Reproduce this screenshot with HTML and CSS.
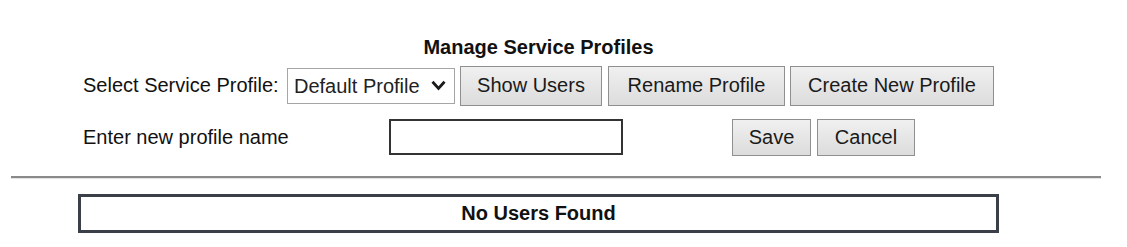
FILE: index.html
```html
<!DOCTYPE html>
<html lang="en">
  <head>
    <meta charset="UTF-8" />
    <meta name="viewport" content="width=device-width, initial-scale=1.0" />
    <title>Manage Service Profiles</title>
    <link rel="stylesheet" href="styles.css">
  </head>
  <body>
    <div class="panel">
      <h1 class="title">Manage Service Profiles</h1>
      <div class="row row-top">
        <label for="profile">Select Service Profile:</label>
        <span class="select-wrap">
          <select id="profile" name="profile">
            <option>Default Profile</option>
          </select>
          <svg class="chevron" width="15" height="11" viewBox="0 0 15 11">
            <path d="M1.5 1.8 L7.5 8.5 L13.5 1.8" fill="none" stroke="#1a1a1a" stroke-width="2.8" />
          </svg>
        </span>
        <button type="button" class="btn btn-show">Show Users</button>
        <button type="button" class="btn btn-rename">Rename Profile</button>
        <button type="button" class="btn btn-create">Create New Profile</button>
      </div>
      <div class="row row-name">
        <label for="new_name" class="name-label">Enter new profile name</label>
        <input type="text" id="new_name" name="new_name" />
        <div class="name-actions">
          <button type="button" class="btn btn-save">Save</button>
          <button type="button" class="btn btn-cancel">Cancel</button>
        </div>
      </div>
    </div>
    <hr class="divider" />
    <div class="panel">
      <table class="users">
        <tr>
          <th>No Users Found</th>
        </tr>
      </table>
    </div>
  </body>
</html>
```

FILE: styles.css
```css
body {
  margin: 0;
  font-family: "Liberation Sans", Arial, sans-serif;
  font-size: 20px;
  color: #111;
  background: #fff;
}
.panel {
  margin-left: 78px;
  width: 921px;
}
.title {
  margin: 0;
  padding-top: 36px;
  font-size: 20px;
  line-height: 22px;
  text-align: center;
}
.row {
  display: flex;
  align-items: center;
  padding-left: 5px;
}
.row-top {
  margin-top: 7px;
  height: 41px;
}
.row-top label {
  width: 204px;
}
.select-wrap {
  position: relative;
  display: inline-block;
  margin-right: 5px;
}
select {
  appearance: none;
  -webkit-appearance: none;
  width: 168px;
  height: 36px;
  padding: 0 0 0 6px;
  border: 1px solid #a5a5a5;
  border-radius: 0;
  background: #fff;
  font-family: inherit;
  font-size: 20px;
  color: #222;
}
.chevron {
  position: absolute;
  top: 12px;
  right: 9px;
}
.btn {
  height: 40px;
  padding: 0;
  border: 1px solid #8f8f8f;
  border-radius: 0;
  background: linear-gradient(#f0f0f0, #dcdcdc);
  font-family: inherit;
  font-size: 20px;
  color: #1a1a1a;
  cursor: pointer;
}
.btn-show {
  width: 142px;
}
.btn-rename {
  width: 177px;
  margin-left: 6px;
}
.btn-create {
  width: 204px;
  margin-left: 5px;
}
.row-name {
  margin-top: 12px;
  height: 38px;
}
.name-label {
  width: 306px;
}
input {
  width: 234px;
  height: 36px;
  box-sizing: border-box;
  border: 2px solid #333;
  padding: 0 4px;
  font-family: inherit;
  font-size: 20px;
}
.name-actions {
  display: flex;
  gap: 6px;
  margin-left: 109px;
}
.btn-save {
  width: 79px;
  height: 37px;
}
.btn-cancel {
  width: 98px;
  height: 37px;
}
.divider {
  margin: 20px 26px 0 11px;
  height: 0;
  border: none;
  border-top: 2px solid #8a8a8a;
  border-bottom: 1px solid #e2e2e2;
}
.users {
  width: 921px;
  margin-top: 15px;
  border-collapse: collapse;
  border: 3px solid #3b3f48;
}
.users th {
  height: 33px;
  padding: 0;
  border: 1px solid #9a9a9a;
  font-size: 20px;
  text-align: center;
}
```
